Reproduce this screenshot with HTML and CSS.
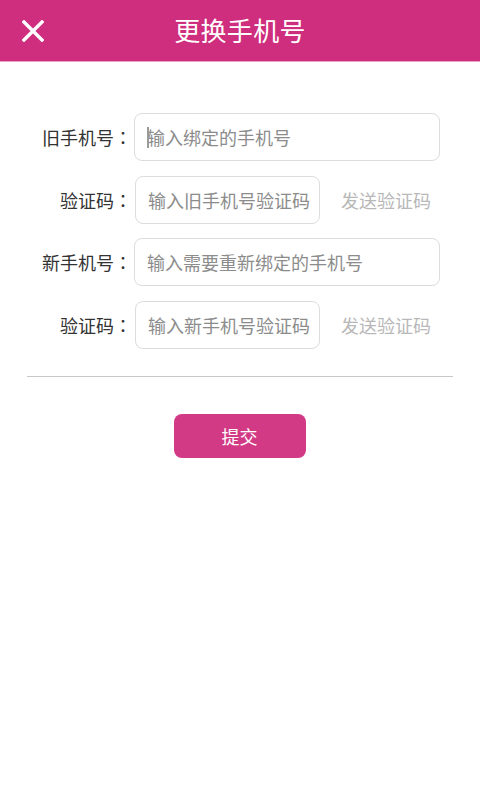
FILE: index.html
```html
<!DOCTYPE html>
<html lang="zh-CN">
<head>
<meta charset="utf-8">
<title>更换手机号</title>
<link rel="stylesheet" href="styles.css">
</head>
<body>
<header class="topbar">
  <button class="close" aria-label="关闭">
    <svg width="22" height="22" viewBox="0 0 22 22"><path d="M2 2 L20 20 M20 2 L2 20" stroke="#fff" stroke-width="3.4" stroke-linecap="square" fill="none"/></svg>
  </button>
  <h1 class="title">更换手机号</h1>
  <span></span>
</header>
<main class="form">
  <div class="row">
    <label class="label">旧手机号<span class="colon">：</span></label>
    <div class="field wide caret"><input class="input" placeholder="输入绑定的手机号"></div>
  </div>
  <div class="row">
    <label class="label">验证码<span class="colon">：</span></label>
    <div class="field code"><input class="input" placeholder="输入旧手机号验证码"></div>
    <span class="send">发送验证码</span>
  </div>
  <div class="row">
    <label class="label">新手机号<span class="colon">：</span></label>
    <div class="field wide"><input class="input" placeholder="输入需要重新绑定的手机号"></div>
  </div>
  <div class="row">
    <label class="label">验证码<span class="colon">：</span></label>
    <div class="field code"><input class="input" placeholder="输入新手机号验证码"></div>
    <span class="send">发送验证码</span>
  </div>
  <hr class="divider">
  <div class="actions">
    <button class="submit">提交</button>
  </div>
</main>
</body>
</html>
```

FILE: styles.css
```css
* { box-sizing: border-box; }
html, body {
  margin: 0;
  padding: 0;
  background: #fff;
  font-family: "Noto Sans CJK SC", "Noto Sans", sans-serif;
}
.topbar {
  height: 62px;
  background: #cf2d7d;
  display: grid;
  grid-template-columns: 1fr auto 1fr;
  align-items: center;
  border-bottom: 1px solid #e7a3c4;
}
.close {
  justify-self: start;
  margin-left: 22px;
  padding: 0;
  border: 0;
  background: none;
  width: 22px;
  height: 22px;
  display: flex;
}
.title {
  margin: 0;
  color: #fff;
  font-size: 26px;
  font-weight: 400;
  letter-spacing: 0.3px;
  line-height: 1;
  padding-bottom: 2px;
}
.form {
  padding-top: 51px;
}
.row {
  display: flex;
  align-items: center;
  height: 48px;
  margin-bottom: 14.5px;
}
.label {
  width: 132px;
  text-align: right;
  font-size: 18px;
  color: #333;
}
.colon {
  display: inline-block;
  width: 18px;
  text-align: center;
  font-family: "Noto Sans CJK TC", "Noto Sans CJK SC", sans-serif;
}
.field {
  position: relative;
  height: 48px;
}
.field.wide { width: 306px; margin-left: 2px; }
.field.code { width: 185px; margin-left: 3px; }
.input {
  width: 100%;
  height: 100%;
  border: 1.5px solid #dcdcdc;
  border-radius: 8px;
  padding: 0 0 0 12px;
  font-family: inherit;
  font-size: 18px;
  color: #333;
  background: #fff;
  outline: none;
}
.input::placeholder { color: #8c8c8c; }
.caret::after {
  content: "";
  position: absolute;
  left: 13px;
  top: 14px;
  width: 1.5px;
  height: 21px;
  background: #9a9a9a;
}
.send {
  margin-left: 21px;
  font-size: 18px;
  color: #b8b8b8;
}
.divider {
  margin: 27px 27px 0;
  border: 0;
  height: 1px;
  background: #c8c8c8;
}
.actions {
  display: flex;
  justify-content: center;
  padding-top: 37px;
  padding-right: 1px;
}
.submit {
  width: 132px;
  height: 44px;
  border: 0;
  border-radius: 8px;
  background: #d23a85;
  color: #fff;
  font-family: inherit;
  font-size: 18px;
}
```
